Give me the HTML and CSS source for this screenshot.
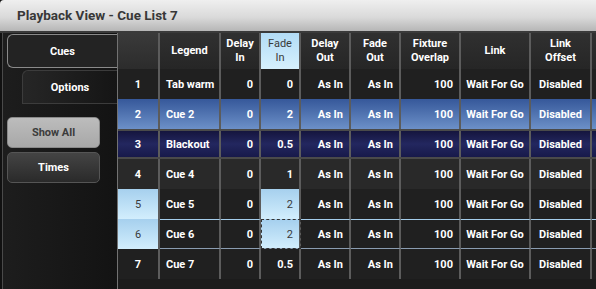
FILE: index.html
```html
<!DOCTYPE html>
<html lang="en">
<head>
  <meta charset="UTF-8" />
  <title>Playback View - Cue List 7</title>
  <link rel="stylesheet" href="styles.css">
</head>
<body>
  <div class="window">
    <header class="titlebar">Playback View - Cue List 7</header>

    <div class="main">
      <aside class="sidebar">
        <div class="tab active">Cues</div>
        <div class="tab sub">Options</div>
        <button class="btn light">Show All</button>
        <button class="btn dark">Times</button>
      </aside>

      <section class="cues">
        <div class="grid-row head">
          <div class="cell num"></div>
          <div class="cell c">Legend</div>
          <div class="cell c">Delay<br>In</div>
          <div class="cell c hl">Fade<br>In</div>
          <div class="cell c">Delay<br>Out</div>
          <div class="cell c">Fade<br>Out</div>
          <div class="cell c">Fixture<br>Overlap</div>
          <div class="cell c">Link</div>
          <div class="cell c">Link<br>Offset</div>
          <div class="cell"></div>
        </div>

        <div class="grid-row">
          <div class="cell num">1</div>
          <div class="cell">Tab warm</div>
          <div class="cell r">0</div>
          <div class="cell r">0</div>
          <div class="cell r">As In</div>
          <div class="cell r">As In</div>
          <div class="cell r">100</div>
          <div class="cell c">Wait For Go</div>
          <div class="cell c">Disabled</div>
          <div class="cell"></div>
        </div>

        <div class="grid-row selected">
          <div class="cell num">2</div>
          <div class="cell">Cue 2</div>
          <div class="cell r">0</div>
          <div class="cell r">2</div>
          <div class="cell r">As In</div>
          <div class="cell r">As In</div>
          <div class="cell r">100</div>
          <div class="cell c">Wait For Go</div>
          <div class="cell c">Disabled</div>
          <div class="cell"></div>
        </div>

        <div class="grid-row current">
          <div class="cell num">3</div>
          <div class="cell">Blackout</div>
          <div class="cell r">0</div>
          <div class="cell r">0.5</div>
          <div class="cell r">As In</div>
          <div class="cell r">As In</div>
          <div class="cell r">100</div>
          <div class="cell c">Wait For Go</div>
          <div class="cell c">Disabled</div>
          <div class="cell"></div>
        </div>

        <div class="grid-row alt">
          <div class="cell num">4</div>
          <div class="cell">Cue 4</div>
          <div class="cell r">0</div>
          <div class="cell r">1</div>
          <div class="cell r">As In</div>
          <div class="cell r">As In</div>
          <div class="cell r">100</div>
          <div class="cell c">Wait For Go</div>
          <div class="cell c">Disabled</div>
          <div class="cell"></div>
        </div>

        <div class="grid-row">
          <div class="cell num hl">5</div>
          <div class="cell">Cue 5</div>
          <div class="cell r">0</div>
          <div class="cell r hl">2</div>
          <div class="cell r">As In</div>
          <div class="cell r">As In</div>
          <div class="cell r">100</div>
          <div class="cell c">Wait For Go</div>
          <div class="cell c">Disabled</div>
          <div class="cell"></div>
        </div>

        <div class="grid-row focus">
          <div class="cell num hl">6</div>
          <div class="cell">Cue 6</div>
          <div class="cell r">0</div>
          <div class="cell r hl dashed">2</div>
          <div class="cell r">As In</div>
          <div class="cell r">As In</div>
          <div class="cell r">100</div>
          <div class="cell c">Wait For Go</div>
          <div class="cell c">Disabled</div>
          <div class="cell"></div>
        </div>

        <div class="grid-row">
          <div class="cell num">7</div>
          <div class="cell">Cue 7</div>
          <div class="cell r">0</div>
          <div class="cell r">0.5</div>
          <div class="cell r">As In</div>
          <div class="cell r">As In</div>
          <div class="cell r">100</div>
          <div class="cell c">Wait For Go</div>
          <div class="cell c">Disabled</div>
          <div class="cell"></div>
        </div>
      </section>
    </div>
  </div>
</body>
</html>
```

FILE: styles.css
```css
body {
  margin: 0;
  background-color: #111;
  font-family: 'Roboto', 'Liberation Sans', sans-serif;
  overflow: hidden;
}

.window {
  width: 596px;
  height: 289px;
  display: flex;
  flex-direction: column;
  overflow: hidden;
}

.titlebar {
  height: 31px;
  line-height: 31px;
  padding-left: 17px;
  font-size: 13.5px;
  font-weight: bold;
  color: #383838;
  background: linear-gradient(#efefef, #dadada 55%, #b6b6b6);
  border-bottom: 2px solid #3a3a3a;
  border-top-left-radius: 4px;
}

.main {
  flex: 1;
  display: flex;
  min-height: 0;
}

.sidebar {
  width: 114px;
  margin-left: 2px;
  border-left: 1px solid #4a4a4a;
  border-right: 1px solid #727272;
  background: linear-gradient(to right, #1d1d1d, #131313);
  display: flex;
  flex-direction: column;
  align-items: flex-start;
  padding-top: 1px;
}

.tab {
  box-sizing: border-box;
  display: flex;
  align-items: center;
  justify-content: center;
  font-size: 11px;
  font-weight: bold;
  color: #fff;
}

.tab.active {
  width: 110px;
  height: 34px;
  margin-left: 4px;
  margin-right: -1px;
  background: #232323;
  border: 1px solid #8a8a8a;
  border-right: none;
  border-radius: 6px 0 0 6px;
}

.tab.sub {
  width: 95px;
  height: 34px;
  margin-top: 2px;
  margin-left: 19px;
  background: linear-gradient(to right, #262626, #151515);
  border: 1px solid #3c3c3c;
  border-right: none;
  border-radius: 6px 0 0 0;
}

.btn {
  width: 93px;
  height: 31px;
  margin-left: 4px;
  border-radius: 5px;
  font-family: 'Roboto', 'Liberation Sans', sans-serif;
  font-size: 11px;
  font-weight: bold;
}

.btn.light {
  margin-top: 13px;
  background: linear-gradient(#bcbcbc, #a8a8a8);
  border: 1px solid #8a8a8a;
  color: #3c3c3c;
}

.btn.dark {
  margin-top: 4px;
  background: linear-gradient(#444, #2a2a2a);
  border: 1px solid #555;
  color: #fff;
}

.cues {
  flex: 1;
  background: #1c1c1c;
  overflow: hidden;
}

.grid-row {
  display: grid;
  grid-template-columns: 42px 61px 40px 40px 50px 50px 60px 70px 61px 60px;
  height: 30px;
  background: #202020;
  font-size: 11px;
  font-weight: bold;
  color: #fff;
}

.cell {
  box-sizing: border-box;
  display: flex;
  align-items: center;
  padding: 0 6px;
  border-right: 2px solid #5c5c5c;
  white-space: nowrap;
}

.cell.num {
  justify-content: center;
}

.cell.c {
  justify-content: center;
  text-align: center;
}

.cell.r {
  justify-content: flex-end;
}

.grid-row.head {
  height: 36px;
  line-height: 14px;
  background: linear-gradient(#303030, #262626);
}

.grid-row.head .cell.num {
  background: linear-gradient(#3a3a3a, #2c2c2c);
}

.grid-row.selected {
  background: linear-gradient(#36589a, #6c90c8);
}

.grid-row.current {
  background: linear-gradient(#15153e, #23275f 50%, #17194a);
  border-top: 2px solid #4a4a4a;
  border-bottom: 2px solid #4a4a4a;
  height: 30px;
  box-sizing: border-box;
}

.grid-row.alt {
  background: #292929;
}

.grid-row.focus .cell:not(.num) {
  border-top: 1px solid #a4ccea;
  border-bottom: 1px solid #8a9cb0;
}

.cell.hl {
  background: linear-gradient(#a6d0ee, #d2eefd);
  color: #3a3a3a;
  font-weight: normal;
}

.grid-row.head .cell.hl {
  background: linear-gradient(#b2dcf6, #d6f0fd);
}

.cell.dashed {
  outline: 1px dashed #333;
  outline-offset: -1px;
}
```
